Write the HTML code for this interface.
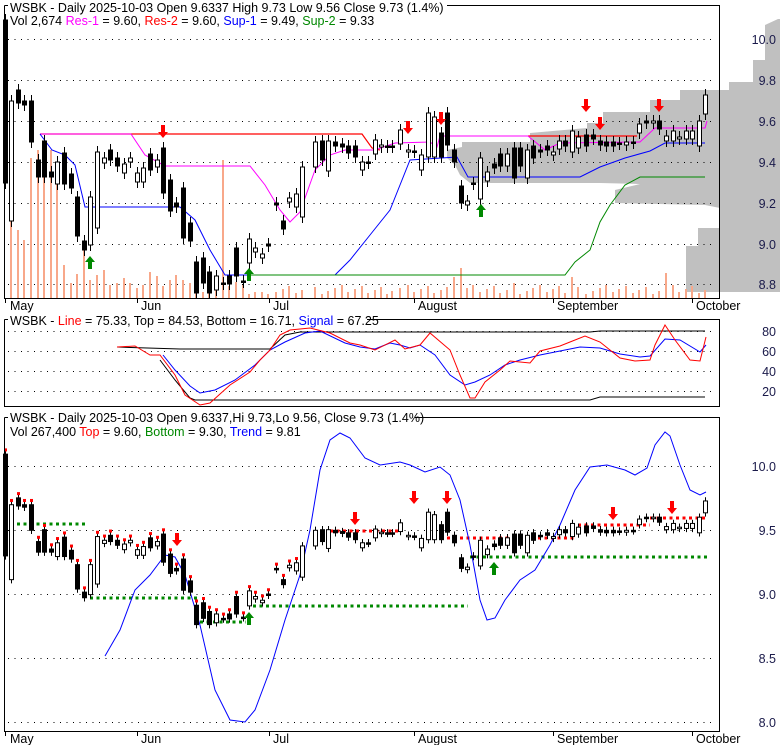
<!DOCTYPE html>
<html><head><meta charset="utf-8"><style>
html,body{margin:0;padding:0;background:#fff;width:780px;height:745px;overflow:hidden}
svg{display:block;font-family:"Liberation Sans",sans-serif}
</style></head><body>
<svg id="s" width="780" height="745" xmlns="http://www.w3.org/2000/svg">
<rect width="780" height="745" fill="#fff"/>
<!-- volume profile -->
<polygon fill="#c0c0c0" points="778,19 780,19 780,292 775,292 686,292 686,246 698,246 698,228 720,228 720,208 705,205 615,203 615,190 640,184 600,183 540,183 470,183 460,175 455,165 447,158 447,150 462,147 462,142 530,142 530,133 587,128 587,123 603,123 603,112 650,112 650,100 680,100 680,90 719,90 729,90 729,82 753,82 753,60 765,60 765,25 778,19"/>
<g id="g"></g>
<!-- frames -->
<g fill="none" stroke="#000" stroke-width="1">
<path d="M4.5,5.5 H8 M447,5.5 H719.5 V298.5 H4.5 V5.5"/>
<path d="M4.5,319.5 H8 M367,319.5 H719.5 V406.5 H4.5 V319.5"/>
<path d="M4.5,417.5 H8 M415,417.5 H719.5 V731.5 H4.5 V417.5"/>
<path d="M5.5,298 v5 M137.5,298 v5 M269.5,298 v5 M414.5,298 v5 M553.5,298 v5 M692.5,298 v5"/>
<path d="M5.5,731 v5 M137.5,731 v5 M269.5,731 v5 M414.5,731 v5 M553.5,731 v5 M692.5,731 v5"/>
</g>
<g font-size="12.5" fill="#000">
<text x="10" y="12">WSBK - Daily 2025-10-03 Open 9.6337  High 9.73  Low 9.56  Close 9.73 (1.4%)</text>
<text x="10" y="25">Vol 2,674 <tspan fill="#f0f">Res-1</tspan> = 9.60, <tspan fill="#f00">Res-2</tspan> = 9.60, <tspan fill="#00f">Sup-1</tspan> = 9.49, <tspan fill="#080">Sup-2</tspan> = 9.33</text>
<text x="10" y="325">WSBK - <tspan fill="#f00">Line</tspan> = 75.33, Top = 84.53, Bottom = 16.71, <tspan fill="#00f">Signal</tspan> = 67.25</text>
<text x="10" y="422">WSBK - Daily 2025-10-03 Open 9.6337,Hi 9.73,Lo 9.56, Close 9.73 (1.4%)</text>
<text x="10" y="436">Vol 267,400 <tspan fill="#f00">Top</tspan> = 9.60, <tspan fill="#080">Bottom</tspan> = 9.30, <tspan fill="#00f">Trend</tspan> = 9.81</text>
</g>
<g font-size="12.5" fill="#000" id="ax"></g>
<g font-size="12.5" fill="#1a1a4a" text-anchor="end">
<text x="776" y="44">10.0</text><text x="776" y="85">9.8</text><text x="776" y="126">9.6</text><text x="776" y="167">9.4</text><text x="776" y="208">9.2</text><text x="776" y="249">9.0</text><text x="776" y="289">8.8</text>
<text x="776" y="336">80</text><text x="776" y="356">60</text><text x="776" y="376">40</text><text x="776" y="396">20</text>
<text x="776" y="471">10.0</text><text x="776" y="535">9.5</text><text x="776" y="599">9.0</text><text x="776" y="663">8.5</text><text x="776" y="727">8.0</text>
</g>
</svg>
<script>
var g=document.getElementById('g'),o='';
function L(pts,c,w,extra){o+='<polyline fill="none" stroke="'+c+'" stroke-width="'+(w||1)+'" '+(extra||'')+' points="'+pts+'"/>';}
// gridlines
[39,80,121,162,203,244,284,331,351,371,391,466,530,594,658,722].forEach(function(y){L('8,'+(y+.5)+' 716,'+(y+.5),'#000',1,'stroke-dasharray="1,5.5"');});
// axis labels
var ax='';[[10,'May'],[141,'Jun'],[273,'Jul'],[418,'August'],[557,'September'],[696,'October']].forEach(function(a){ax+='<text x="'+a[0]+'" y="310">'+a[1]+'</text><text x="'+a[0]+'" y="743">'+a[1]+'</text>';});
document.getElementById('ax').innerHTML=ax;
// candles x,top,bottom,white(1)/black(0)
var C=[[5,20,183,0],[11,101,221,1],[18,90,103,0],[24,101,105,0],[31,101,142,0],[38,160,177,0],[44,141,177,0],[51,172,177,0],[57,162,184,1],[64,153,184,0],[71,174,188,0],[77,197,236,0],[84,241,250,0],[90,197,245,1],[97,152,228,1],[104,158,163,1],[110,150,160,0],[117,158,166,0],[124,164,173,1],[130,158,162,1],[137,173,182,1],[143,168,182,1],[150,154,170,0],[157,160,167,1],[163,148,193,0],[170,180,211,0],[176,203,207,0],[183,188,238,0],[190,223,241,0],[196,262,293,0],[203,258,283,0],[209,272,293,0],[216,276,290,1],[223,283,284,0],[229,276,284,0],[236,248,276,0],[243,281,282,0],[249,239,263,1],[255,248,252,1],[262,254,258,1],[268,244,246,0],[276,203,205,0],[283,221,229,0],[289,198,202,1],[296,194,207,1],[302,167,217,1],[315,142,167,1],[322,141,160,0],[328,141,171,1],[335,142,146,0],[342,144,147,0],[348,146,153,0],[355,146,157,0],[362,162,170,1],[368,162,163,0],[375,140,154,1],[381,145,147,1],[387,146,147,0],[392,146,147,0],[400,130,144,1],[408,150,152,1],[414,151,152,0],[421,155,170,1],[428,113,157,1],[434,117,157,1],[441,133,157,0],[447,113,145,0],[454,150,162,0],[461,186,203,0],[467,201,205,1],[473,183,184,0],[480,158,199,1],[487,172,181,1],[494,164,168,0],[500,154,166,0],[507,154,166,1],[514,148,178,0],[520,148,166,0],[527,150,178,1],[533,146,158,0],[540,150,152,0],[547,146,150,0],[553,152,155,1],[559,141,149,1],[565,141,146,0],[572,131,152,1],[578,137,148,1],[586,135,146,0],[593,135,139,0],[600,141,145,0],[606,142,146,0],[613,142,146,0],[619,143,144,0],[626,142,145,1],[633,142,143,0],[639,124,133,1],[646,121,123,0],[653,121,123,1],[659,121,129,0],[666,136,141,1],[673,131,141,1],[679,137,139,1],[686,131,139,1],[692,131,139,1],[699,121,146,1],[705,95,114,1]];
// volume
var vt=[20,220,230,240,158,150,150,150,168,265,283,274,250,280,275,270,285,283,278,283,288,285,272,276,286,280,275,280,283,290,292,292,288,160,286,282,285,294,292,292,294];
C.forEach(function(c,i){var t=i<vt.length?vt[i]:(285+((i*7)%10));if(c[0]==454)t=277;if(c[0]==461)t=268;if(c[0]==572)t=277;if(c[0]==666)t=273;if(c[0]==494)t=286;if(c[0]==514)t=283;if(i==0)t=298;o+='<rect x="'+(c[0]-1)+'" y="'+t+'" width="2" height="'+(298-t)+'" fill="#f8a88a"/>';});
// profile overlay lines panel1
L('40,134 362,134 372,148 380,150','#f00',1.2);L('528,136 637,136','#f00',1.2);
L('40,134 131,134 145,155 165,166 250,166 265,185 280,210 290,222 300,212 315,170 330,155 345,150 375,150 395,143 430,142 437,147 440,136 528,136 545,150 560,143 640,142 655,128 705,128 707,121','#f0f');
L('40,134 52,150 65,155 75,165 85,207 180,207 195,220 210,250 225,275 335,275 350,260 370,235 390,210 400,185 410,160 457,157 468,177 580,177 600,167 625,158 650,151 665,143 705,143','#00f');
L('250,275 565,275 575,262 590,250 600,222 610,205 625,185 640,177 705,177','#080');
function cdl(c,f,x0){var x=c[0],t=f(c[1]),b=f(c[2]);if(b-t<1.5)b=t+1.5;var ht=f(c[1]-6),hb=f(c[2]+6);o+='<line x1="'+(x+.5)+'" y1="'+ht+'" x2="'+(x+.5)+'" y2="'+hb+'" stroke="#000"/>';o+='<rect x="'+(x-2)+'.5" y="'+t+'" width="4" height="'+(b-t)+'" fill="'+(c[3]?'#fff':'#000')+'" stroke="#000"/>';}
var f1=function(y){return y},f3=function(y){return 466+(y-39)*0.6244};
C.forEach(function(c){cdl(c,f1);});
function arr(x,y,c,up){var d=up?'M'+x+','+(y-8)+' l-5,6 h3 v7 h4 v-7 h3 z':'M'+x+','+(y+8)+' l-5,-6 h3 v-7 h4 v7 h3 z';o+='<path d="'+d+'" fill="'+c+'"/>';}
[[163,130],[408,126],[441,117],[586,104],[600,122],[659,104]].forEach(function(a){arr(a[0],a[1],'#f00',0);});
[[90,264],[249,276],[481,212]].forEach(function(a){arr(a[0],a[1],'#080',1);});
// panel2
L('117,347 180,349 270,349 285,335 300,332 590,332 600,331 705,331','#000');
L('160,360 175,380 190,398 195,400 590,400 600,397 705,397','#000');
L('163,355 175,370 190,386 200,393 215,390 235,380 255,365 270,350 285,342 305,333 320,331 345,343 360,347 375,349 390,343 400,345 410,348 420,345 435,355 450,375 465,385 475,382 490,375 505,365 520,360 540,355 565,350 580,347 600,348 620,354 640,357 650,356 665,339 680,340 700,352 706,345','#00f');
L('117,347 135,346 150,355 160,355 175,375 185,395 200,405 210,403 230,385 250,372 260,360 270,350 280,335 290,330 310,328 330,333 350,343 360,345 375,350 395,340 405,349 420,345 430,333 450,350 460,375 470,398 475,398 485,382 500,370 510,361 530,363 540,351 560,346 570,342 585,336 600,342 620,358 635,361 650,360 655,345 665,325 675,340 690,360 700,361 706,337','#f00');
// panel3
function dot(x1,x2,y,c){L(x1+','+y+' '+x2+','+y,c,3,'stroke-dasharray="3,3.5"');}
dot(17,87,524,'#080');dot(90,198,598,'#080');dot(200,246,622,'#080');dot(253,468,606,'#080');dot(470,707,557,'#080');
dot(330,400,531,'#f00');dot(447,575,538,'#f00');dot(578,650,525,'#f00');dot(650,707,518,'#f00');
L('105,656 120,630 135,590 150,575 165,555 175,557 185,575 200,625 215,690 230,720 245,722 255,710 270,670 285,620 300,575 310,530 320,470 330,440 340,433 350,438 365,458 380,465 400,462 410,465 425,472 440,467 450,475 460,500 470,545 480,600 487,620 495,618 505,600 520,580 535,570 550,545 560,525 575,490 590,467 607,465 625,470 635,475 647,468 655,445 665,432 670,436 680,465 690,490 700,495 706,492','#00f');
C.forEach(function(c){cdl(c,f3);if(c[0]<300){var y=f3(c[1]-6);o+='<rect x="'+(c[0]-1)+'" y="'+(y-2)+'" width="3" height="3" fill="#f00"/>';}});
[[177,538],[355,517],[414,496],[447,496],[613,512],[672,506]].forEach(function(a){arr(a[0],a[1],'#f00',0);});
[[249,620],[494,570]].forEach(function(a){arr(a[0],a[1],'#080',1);});
g.innerHTML=o;
</script>
</body></html>
